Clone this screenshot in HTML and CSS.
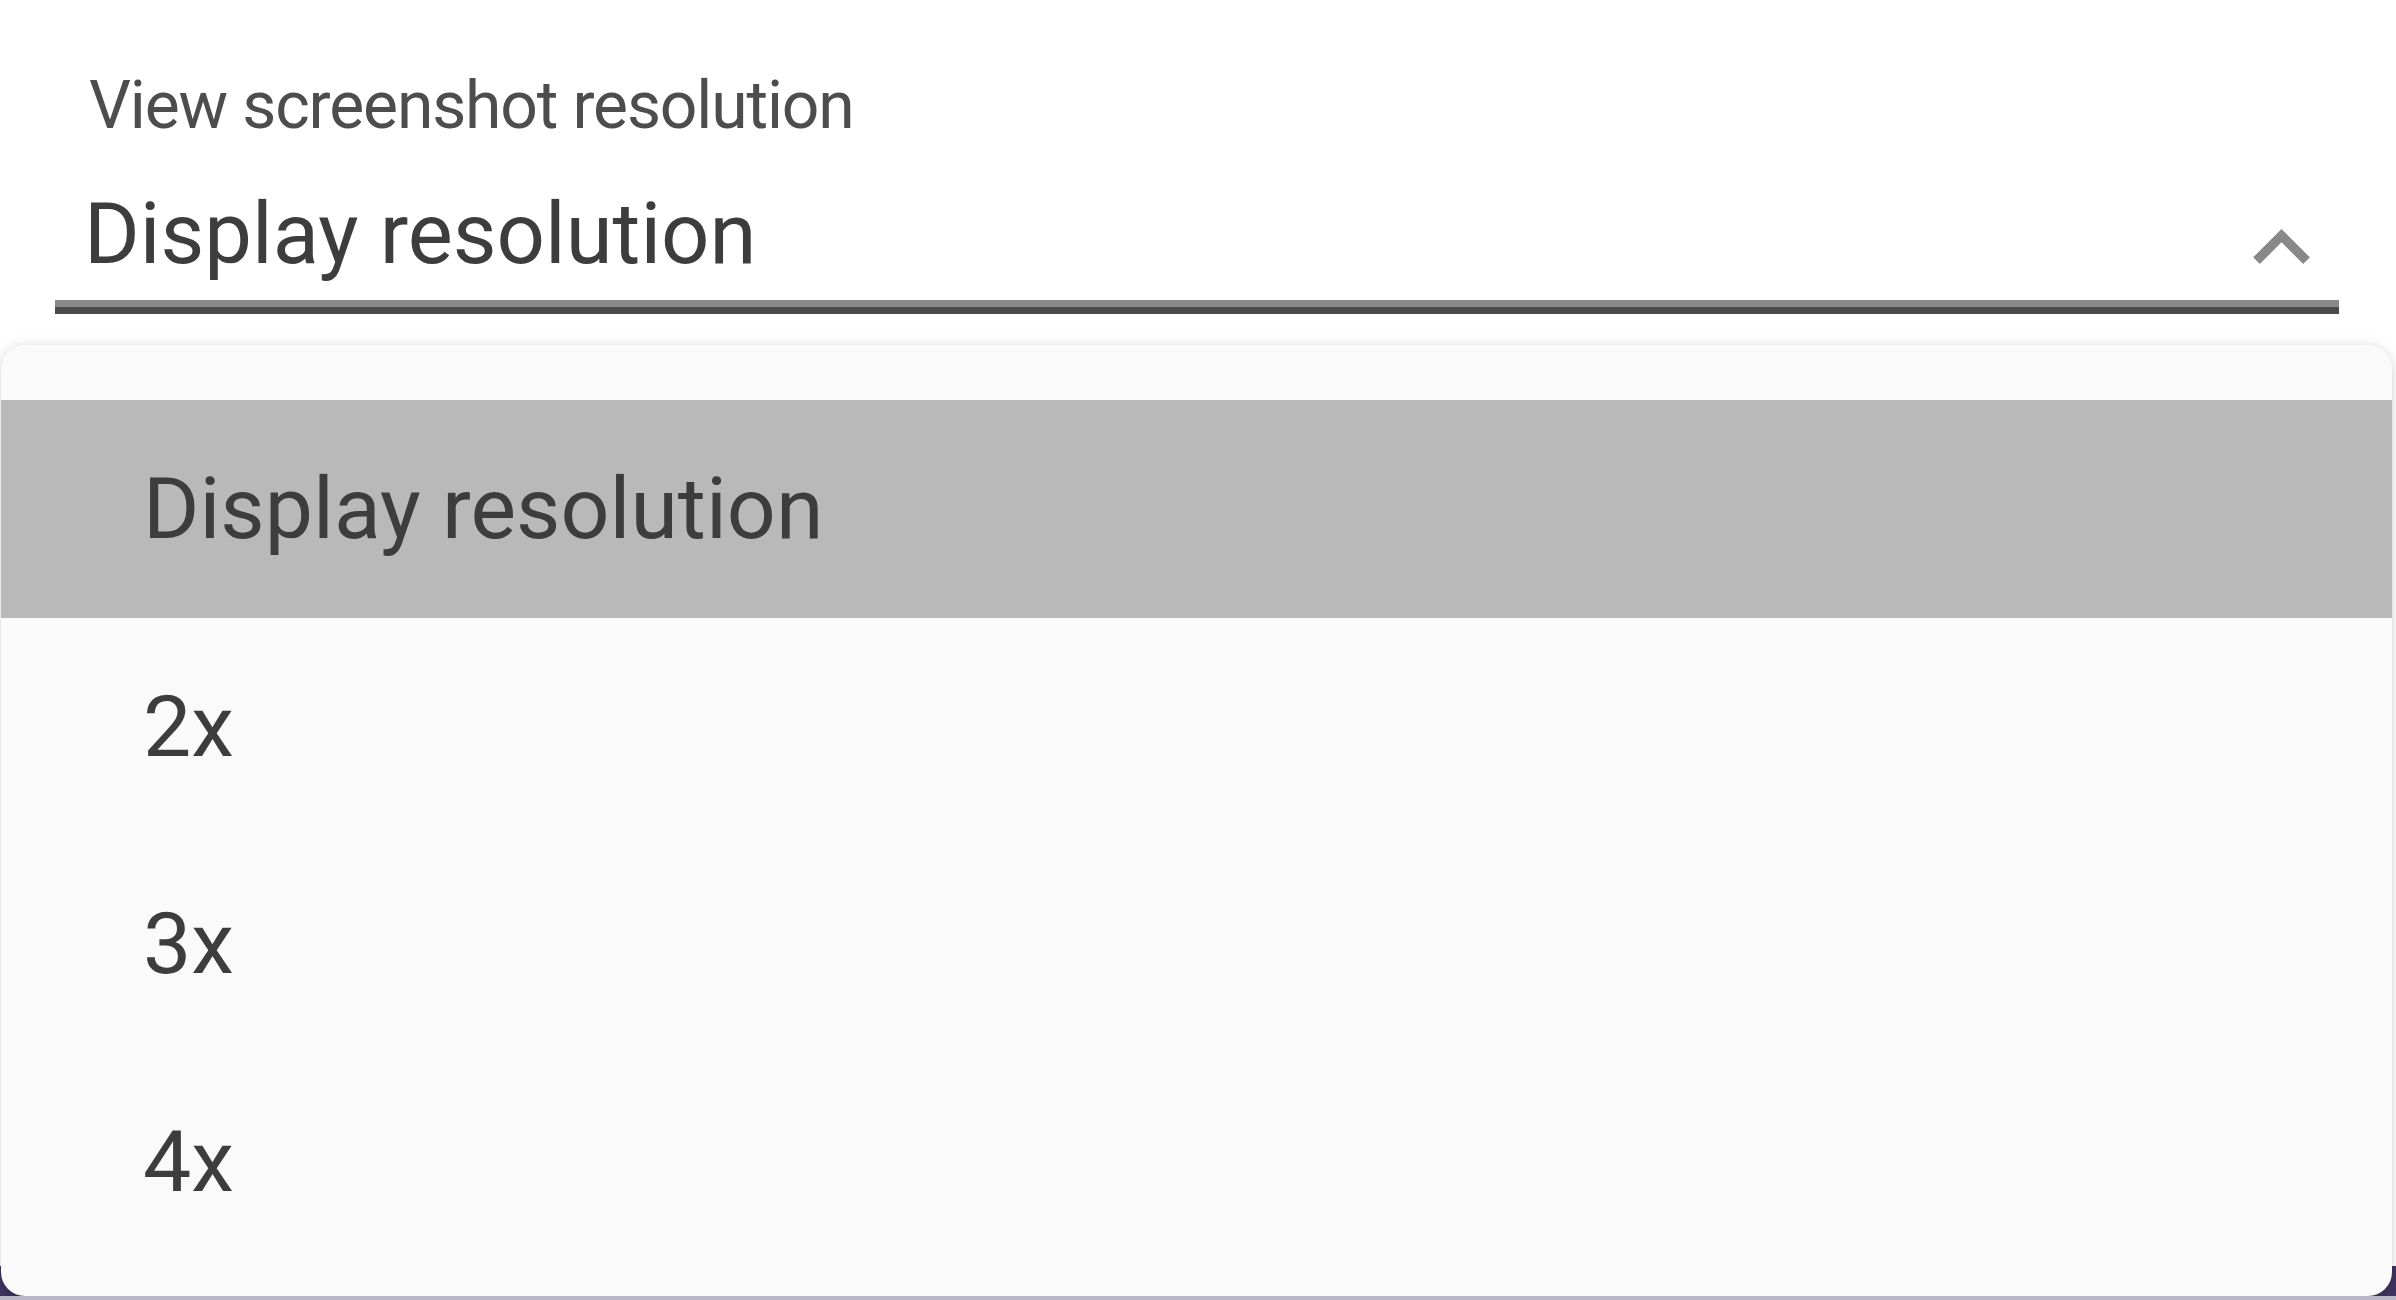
FILE: index.html
```html
<!DOCTYPE html>
<html lang="en">
<head>
  <meta charset="UTF-8" />
  <meta name="viewport" content="width=device-width, initial-scale=1" />
  <title>View screenshot resolution</title>
  <link rel="stylesheet" href="styles.css">
</head>
<body>

  <!-- Select field -->
  <div class="field">
    <div class="field-label">View screenshot resolution</div>
    <div class="field-row">
      <span class="field-value">Display resolution</span>
      <svg class="chevron" viewBox="6 8 12 7.41" width="57" height="35" aria-hidden="true">
        <path d="M12 8l-6 6 1.41 1.41L12 10.83l4.59 4.58L18 14z" fill="currentColor" />
      </svg>
    </div>
    <div class="field-line"></div>
  </div>

  <!-- Open menu -->
  <div class="menu-wrap">
    <ul class="menu">
      <li class="menu-item is-selected">Display resolution</li>
      <li class="menu-item">2x</li>
      <li class="menu-item">3x</li>
      <li class="menu-item">4x</li>
    </ul>
  </div>
  <div class="edge"></div>

</body>
</html>
```

FILE: styles.css
```css
* {
  margin: 0;
  padding: 0;
  box-sizing: border-box;
}
body {
  font-family: Roboto, "Liberation Sans", sans-serif;
  background-color: #ffffff;
  color: #3d3d3d;
  height: 1300px;
  overflow: hidden;
  display: flex;
  flex-direction: column;
  -webkit-font-smoothing: antialiased;
}

/* Select field */
.field {
  margin-left: 55px;
  width: 2284px;
  padding-top: 66px;
}
.field-label {
  padding-left: 34px;
  font-size: 66px;
  line-height: 80px;
  letter-spacing: -1.15px;
  color: #4d4d4d;
}
.field-row {
  display: flex;
  justify-content: space-between;
  align-items: flex-start;
  margin-top: 38px;
  height: 100px;
  padding-left: 29px;
  padding-right: 29px;
}
.field-value {
  font-size: 85px;
  line-height: 100px;
  color: #3d3d3d;
}
.chevron {
  margin-top: 45px;
  color: #888888;
}
.field-line {
  margin-top: 16px;
  height: 14px;
  border-top: 7px solid #8a8a8a;
  border-bottom: 7px solid #4a4a4a;
}

/* Menu */
.menu-wrap {
  margin-top: 31px;
  flex: 1;
  padding: 0 4px 0 1px;
  background: linear-gradient(to bottom, transparent calc(100% - 30px), #3e345f calc(100% - 30px));
}
.menu {
  list-style: none;
  height: 100%;
  background: #fafafa;
  border-radius: 24px;
  padding: 55px 0 26px;
  box-shadow:
    0 -3px 12px rgba(0, 0, 0, 0.07),
    0 4px 10px rgba(0, 0, 0, 0.12);
}
.menu-item {
  height: 217.5px;
  line-height: 217.5px;
  padding-left: 142px;
  font-size: 86px;
  color: #3d3d3d;
}
.menu-item.is-selected {
  background: #b9b9b9;
}
.edge {
  height: 4px;
  background: #bab7c9;
}
```
